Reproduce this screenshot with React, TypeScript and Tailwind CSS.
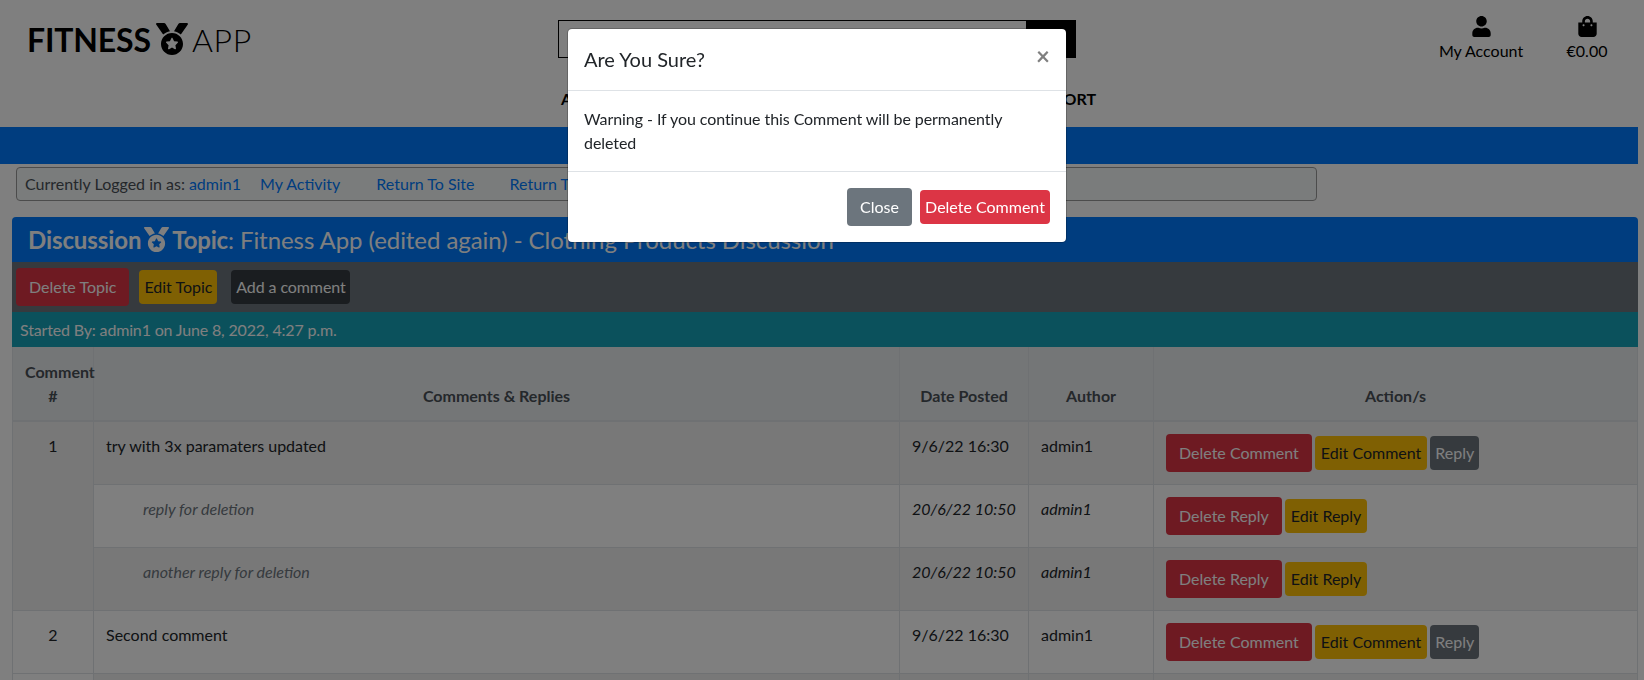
import React from "react";
import { FaMedal, FaUser, FaShoppingBag, FaSearch } from "react-icons/fa";

function Btn({ kind, big, className = "", children }: { kind: "del" | "edit" | "reply" | "dark"; big?: boolean; className?: string; children: React.ReactNode }) {
  const colors = {
    del: "bg-[#dc3545] text-white",
    edit: "bg-[#ffc107] text-[#212529]",
    reply: "bg-[#6c757d] text-white",
    dark: "bg-[#343a40] text-white",
  }[kind];
  return (
    <span className={`${colors} ${big ? "h-[38px] px-[13px]" : "h-[34px]"} inline-flex items-center rounded-[4px] whitespace-nowrap ${className}`}>
      {children}
    </span>
  );
}

type Row = { n?: string; span?: number; text: string; date: string; author: string; reply?: boolean; striped: boolean };

const rows: Row[] = [
  { n: "1", span: 3, text: "try with 3x paramaters updated", date: "9/6/22 16:30", author: "admin1", striped: true },
  { text: "reply for deletion", date: "20/6/22 10:50", author: "admin1", reply: true, striped: false },
  { text: "another reply for deletion", date: "20/6/22 10:50", author: "admin1", reply: true, striped: true },
  { n: "2", span: 1, text: "Second comment", date: "9/6/22 16:30", author: "admin1", striped: false },
];

const th = "border border-b-2 border-t-0 border-[#dee2e6] px-[12px] pb-[12px] align-bottom";
const td = "border border-[#dee2e6] p-[12px] align-top";

export default function App() {
  return (
    <div className="relative h-[680px] overflow-hidden bg-white font-['Lato',sans-serif] text-[16px] leading-[24px] text-[#212529]">
      <div className="w-[1638px]">
        <header className="h-[127px]">
          <div className="flex h-[78px]">
            <div className="flex w-[558px] items-start pl-[27px] pt-[21px] text-[32px] leading-[38px] text-black">
              <span className="font-bold tracking-[-0.15px]">FITNESS</span>
              <FaMedal className="ml-[4px] mr-[3px] mt-[2px] h-[32px] w-[34px]" />
              <span className="font-light tracking-[0.7px]">APP</span>
            </div>
            <div className="mt-[20px] flex h-[38px] w-[518px] border border-black">
              <div className="flex-1" />
              <div className="flex w-[49px] items-center justify-center bg-black text-white">
                <FaSearch />
              </div>
            </div>
            <div className="flex flex-1 pl-[363px] pt-[16px] text-black">
              <div className="flex w-[84px] flex-col items-center whitespace-nowrap">
                <FaUser className="h-[21px] w-[19px] shrink-0" />
                <span className="mt-[2px]">My Account</span>
              </div>
              <div className="ml-[44px] flex w-[40px] flex-col items-center whitespace-nowrap">
                <FaShoppingBag className="h-[21px] w-[19px] shrink-0" />
                <span className="mt-[2px]">€0.00</span>
              </div>
            </div>
          </div>
          <nav className="ml-[561px] flex w-[535px] justify-between pt-[9px] font-bold text-black">
            <span>ALL PRODUCTS</span>
            <span>CLOTHING</span>
            <span>SUPPORT</span>
          </nav>
        </header>

        <div className="h-[37px] bg-[#007bff]" />

        <div className="ml-4 mt-[3px] flex h-[34px] w-[1301px] items-center rounded-[4px] border border-[#999] bg-[#f5f8f8] pl-[8px]">
          <span className="text-[#495057]">Currently Logged in as:</span>
          <a className="ml-[4px] text-[#007bff]">admin1</a>
          <a className="ml-[19px] text-[#007bff]">My Activity</a>
          <a className="ml-[36px] text-[#007bff]">Return To Site</a>
          <a className="ml-[35px] text-[#007bff]">Return To Forum</a>
        </div>

        <main className="ml-3 mt-4">
          <div className="flex h-[45px] items-center rounded-t-[4px] bg-[#007bff] pl-[16px] text-[24px] text-white">
            <span className="font-bold tracking-[-0.1px]">Discussion</span>
            <FaMedal className="ml-[3px] mr-[3px] h-[25px] w-[25px]" />
            <span className="font-bold tracking-[-0.2px]">Topic</span>
            <span className="tracking-[-0.06px]">: Fitness App (edited again) - Clothing Products Discussion</span>
          </div>
          <div className="flex h-[50px] items-center bg-[#6c757d] pl-[4px]">
            <Btn kind="del" big>Delete Topic</Btn>
            <Btn kind="edit" className="ml-[10px] w-[78px] justify-center">Edit Topic</Btn>
            <Btn kind="dark" className="ml-[14px] w-[119px] justify-center tracking-[-0.1px]">Add a comment</Btn>
          </div>
          <div className="flex h-[35px] items-center bg-[#17a2b8] pl-[8px] tracking-[-0.16px] text-white">
            Started By: admin1 on June 8, 2022, 4:27 p.m.
          </div>

          <table className="w-full table-fixed border-collapse">
            <colgroup>
              <col className="w-[81px]" />
              <col className="w-[806px]" />
              <col className="w-[129px]" />
              <col className="w-[125px]" />
              <col />
            </colgroup>
            <thead>
              <tr className="h-[74px] bg-[#e9ecef] font-bold text-[#495057]">
                <th className={th}>Comment #</th>
                <th className={th}>Comments &amp; Replies</th>
                <th className={th}>Date Posted</th>
                <th className={th}>Author</th>
                <th className={th}>Action/s</th>
              </tr>
            </thead>
            <tbody>
              {rows.map((r, i) => (
                <tr key={i} className={`h-[63px] ${r.striped ? "bg-[#f0f0f0]" : "bg-white"}`}>
                  {r.n && (
                    <td rowSpan={r.span} className={`${td} text-center ${r.n === "1" ? "bg-[#f0f0f0]" : "bg-white"}`}>
                      {r.n}
                    </td>
                  )}
                  <td className={`${td} ${r.reply ? "pl-[49px] italic text-[#6c757d]" : ""}`}>{r.text}</td>
                  <td className={`${td} ${r.reply ? "italic" : ""}`}>{r.date}</td>
                  <td className={`${td} ${r.reply ? "italic" : ""}`}>{r.author}</td>
                  <td className={td}>
                    <div className="flex items-center gap-[3px]">
                      <Btn kind="del" big>{r.reply ? "Delete Reply" : "Delete Comment"}</Btn>
                      <Btn kind="edit" className="px-[6px]">{r.reply ? "Edit Reply" : "Edit Comment"}</Btn>
                      {!r.reply && <Btn kind="reply" className="px-[5px]">Reply</Btn>}
                    </div>
                  </td>
                </tr>
              ))}
              <tr className="h-[63px] bg-[#f0f0f0]">
                <td className="border border-[#dee2e6] bg-white" />
                <td className="border border-[#dee2e6]" />
                <td className="border border-[#dee2e6]" />
                <td className="border border-[#dee2e6]" />
                <td className="border border-[#dee2e6]" />
              </tr>
            </tbody>
          </table>
        </main>
      </div>

      <div className="fixed inset-0 bg-black/50" />

      <div className="absolute left-[567px] top-[28px] w-[500px] rounded-[5px] border border-black/20 bg-white bg-clip-padding">
        <div className="flex h-[62px] items-start justify-between border-b border-[#dee2e6] px-[16px] pt-[15px]">
          <h5 className="text-[20px] leading-[30px]">Are You Sure?</h5>
          <span className="text-[24px] font-bold leading-[24px] text-[#808080]">×</span>
        </div>
        <div className="h-[80px] p-[16px] tracking-[-0.07px]">Warning - If you continue this Comment will be permanently deleted</div>
        <div className="flex h-[71px] items-center justify-end gap-[8px] border-t border-[#dee2e6] pr-[16px]">
          <span className="flex h-[38px] w-[65px] items-center justify-center rounded-[4px] bg-[#6c757d] text-white">Close</span>
          <span className="flex h-[34px] w-[130px] items-center justify-center rounded-[4px] bg-[#dc3545] text-white">Delete Comment</span>
        </div>
      </div>
    </div>
  );
}
